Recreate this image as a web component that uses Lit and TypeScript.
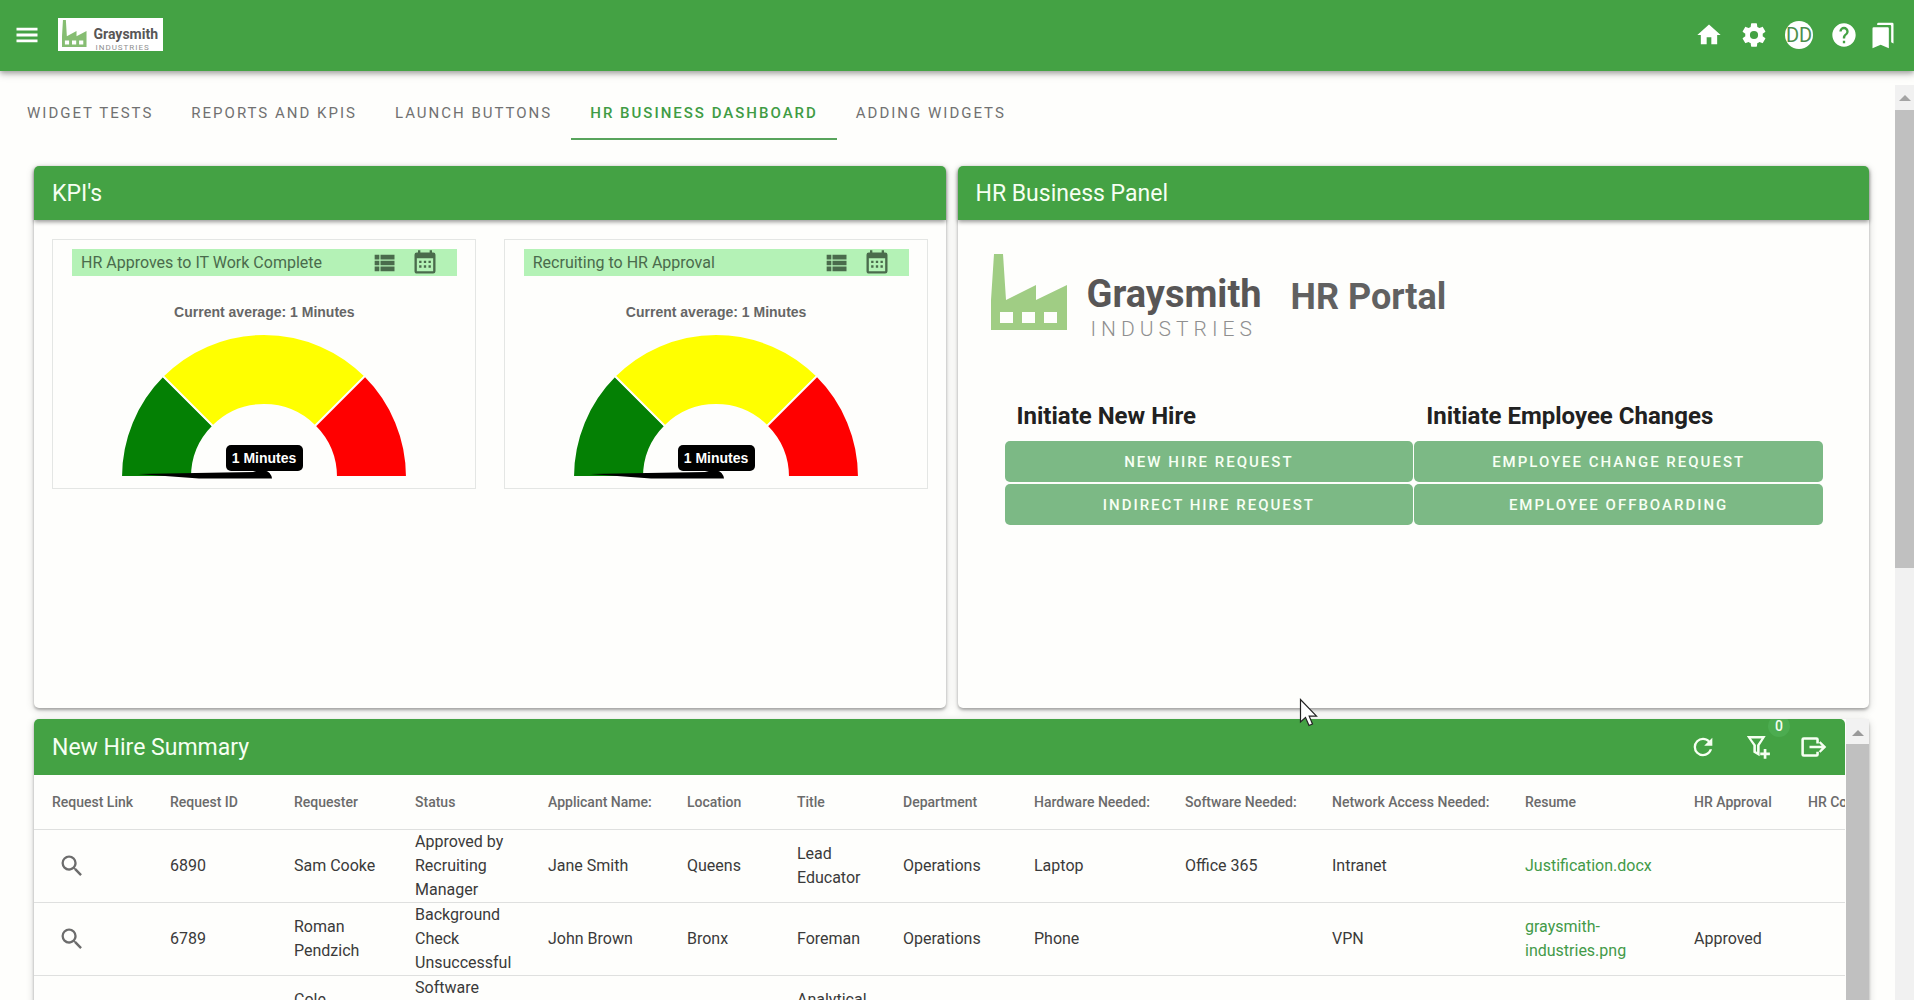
import { LitElement, html, css, svg } from "lit";
import { customElement, property } from "lit/decorators.js";
import { classMap } from "lit/directives/class-map.js";

const ICONS: Record<string, string> = {
  menu: "M3,5.7H21V8.2H3V5.7M3,10.8H21V13.2H3V10.8M3,15.8H21V18.3H3V15.8Z",
  home: "M10,20V14H14V20H19V12H22L12,3L2,12H5V20H10Z",
  cog: "M12,15.5A3.5,3.5 0 0,1 8.5,12A3.5,3.5 0 0,1 12,8.5A3.5,3.5 0 0,1 15.5,12A3.5,3.5 0 0,1 12,15.5M19.43,12.97C19.47,12.65 19.5,12.33 19.5,12C19.5,11.67 19.47,11.34 19.43,11L21.54,9.37C21.73,9.22 21.78,8.95 21.66,8.73L19.66,5.27C19.54,5.05 19.27,4.96 19.05,5.05L16.56,6.05C16.04,5.66 15.5,5.32 14.87,5.07L14.5,2.42C14.46,2.18 14.25,2 14,2H10C9.75,2 9.54,2.18 9.5,2.42L9.13,5.07C8.5,5.32 7.96,5.66 7.44,6.05L4.95,5.05C4.73,4.96 4.46,5.05 4.34,5.27L2.34,8.73C2.21,8.95 2.27,9.22 2.46,9.37L4.57,11C4.53,11.34 4.5,11.67 4.5,12C4.5,12.33 4.53,12.65 4.57,12.97L2.46,14.63C2.27,14.78 2.21,15.05 2.34,15.27L4.34,18.73C4.46,18.95 4.73,19.03 4.95,18.95L7.44,17.94C7.96,18.34 8.5,18.68 9.13,18.93L9.5,21.58C9.54,21.82 9.75,22 10,22H14C14.25,22 14.46,21.82 14.5,21.58L14.87,18.93C15.5,18.67 16.04,18.34 16.56,17.94L19.05,18.95C19.27,19.03 19.54,18.95 19.66,18.73L21.66,15.27C21.78,15.05 21.73,14.78 21.54,14.63L19.43,12.97Z",
  help: "M15.07,11.25L14.17,12.17C13.45,12.89 13,13.5 13,15H11V14.5C11,13.39 11.45,12.39 12.17,11.67L13.41,10.41C13.78,10.05 14,9.55 14,9C14,7.89 13.1,7 12,7A2,2 0 0,0 10,9H8A4,4 0 0,1 12,5A4,4 0 0,1 16,9C16,9.88 15.64,10.67 15.07,11.25M13,19H11V17H13M12,2A10,10 0 0,0 2,12A10,10 0 0,0 12,22A10,10 0 0,0 22,12C22,6.47 17.5,2 12,2Z",
  bookmarks: "M19 18.300L21 19.300V2.600Q21 1.600 20 1.600H8Q7 1.600 7 2.600V3.400H18.200Q19 3.400 19 4.200V18.300ZM16 5.400H4Q3 5.400 3 6.400V23.400L10 20.400L17 23.400V6.400Q17 5.400 16 5.400Z",
  list: "M9,5V9H21V5M9,19H21V15H9M9,14H21V10H9M4,9H8V5H4M4,19H8V15H4M4,14H8V10H4V14Z",
  calendar: "M9,10V12H7V10H9M13,10V12H11V10H13M17,10V12H15V10H17M19,3A2,2 0 0,1 21,5V19A2,2 0 0,1 19,21H5C3.89,21 3,20.1 3,19V5A2,2 0 0,1 5,3H6V1H8V3H16V1H18V3H19M19,19V8H5V19H19M9,14V16H7V14H9M13,14V16H11V14H13M17,14V16H15V14H17Z",
  refresh: "M17.65,6.35C16.2,4.9 14.21,4 12,4A8,8 0 0,0 4,12A8,8 0 0,0 12,20C15.73,20 18.84,17.45 19.73,14H17.65C16.83,16.33 14.61,18 12,18A6,6 0 0,1 6,12A6,6 0 0,1 12,6C13.66,6 15.14,6.69 16.22,7.78L13,11H20V4L17.65,6.35Z",
  filter: "M2.4,2.6H18.6L13.4,10.8V20L8,16.8V10.8L2.4,2.600ZM6,4.800L10.2,10.200V15.600L11.200,16.200V10.200L15,4.800H6ZM16.900,13.800H19.200V16.800H22.200V19.100H19.200V22.100H16.900V19.100H13.900V16.800H16.900V13.800Z",
  exit: "M4,3.6H15A2,2 0 0,1 17,5.6V9H14.8V5.8H4.200V18.2H14.8V16H17V18.4A2,2 0 0,1 15,20.4H4A2,2 0 0,1 2,18.4V5.6A2,2 0 0,1 4,3.6M18.4,7L23.4,12L18.4,17L17,15.6L19.4,13.100H9V10.900H19.4L17,8.4L18.4,7Z",
  search: "M9.5,3A6.5,6.5 0 0,1 16,9.5C16,11.11 15.41,12.59 14.44,13.73L14.71,14H15.5L20.5,19L19,20.5L14,15.5V14.71L13.73,14.44C12.59,15.41 11.11,16 9.5,16A6.5,6.5 0 0,1 3,9.5A6.5,6.5 0 0,1 9.5,3M9.5,5C7,5 5,7 5,9.5C5,12 7,14 9.5,14C12,14 14,12 14,9.5C14,7 12,5 9.5,5Z",
};

const icon = (name: string) =>
  html`<svg class="icon" viewBox="0 0 24 24" aria-hidden="true"><path fill-rule="evenodd" d=${ICONS[name]} /></svg>`;

const shared = css`
  * { box-sizing: border-box; }
  button {
    border: 0;
    margin: 0;
    padding: 0;
    background: none;
    color: inherit;
    font: inherit;
    cursor: pointer;
  }
  a { color: inherit; text-decoration: none; }
  .icon { display: block; width: 28px; height: 28px; fill: currentColor; }
`;

@customElement("brand-logo")
class BrandLogo extends LitElement {
  @property({ type: Boolean, reflect: true }) small = false;
  static styles = css`
    :host { display: flex; gap: 20px; }
    .mark { display: block; width: 76px; height: 76px; fill: #a0cd84; }
    .words { display: flex; flex-direction: column; padding-top: 18px; }
    .name { font: 700 38px/44px Roboto, sans-serif; color: #585656; }
    .sub {
      padding-left: 4px;
      font: 300 21px/26px Roboto, sans-serif;
      letter-spacing: 5px;
      color: #8f8f8f;
    }
    :host([small]) {
      gap: 7px;
      padding: 2px 5px 0 4px;
      background: #fff;
      height: 33px;
      width: 105px;
      box-sizing: border-box;
      overflow: hidden;
    }
    :host([small]) .mark { width: 26px; height: 27px; fill: #86bd72; }
    :host([small]) .words { padding-top: 4px; }
    :host([small]) .name { font-size: 14px; line-height: 20px; }
    :host([small]) .sub { font-size: 8px; line-height: 8px; letter-spacing: 1px; padding-left: 2px; font-weight: 400; }
  `;
  render() {
    return html`
      <svg class="mark" viewBox="0 0 76 76" preserveAspectRatio="none" role="img" aria-label="Factory">
        <path
          fill-rule="evenodd"
          d="M3 0H12L15 46L45 31V46L76 31V76H0V46ZM9 58V69H22V58ZM31 58V69H44V58ZM53 58V69H66V58Z"
        />
      </svg>
      <div class="words"><span class="name">Graysmith</span><span class="sub">INDUSTRIES</span></div>
    `;
  }
}

@customElement("kpi-gauge")
class KpiGauge extends LitElement {
  @property() label = "";
  @property() value = "";
  static styles = [
    shared,
    css`
      :host {
        display: block;
        border: 1px solid #e4e6e4;
        padding: 9px 18px 8px 19px;
      }
      .bar {
        display: flex;
        align-items: center;
        height: 27px;
        padding: 0 18px 0 9px;
        background: #b4f2b6;
        color: #4a6b4c;
        font-size: 16px;
        line-height: 27px;
      }
      .title { flex: 1; }
      .bar button + button { margin-left: 13px; }
      .average {
        margin: 26px 0 12px;
        text-align: center;
        font: 700 14px/20px "Liberation Sans", Arial, sans-serif;
        color: #666;
      }
      .dial { display: block; width: 286px; height: 146px; margin: 0 auto; }
      .badge { font: 700 14px "Liberation Sans", Arial, sans-serif; fill: #fff; text-anchor: middle; }
    `,
  ];
  private slice(from: number, to: number, color: string) {
    const at = (r: number, deg: number) => {
      const a = (deg * Math.PI) / 180;
      return `${(143 - r * Math.cos(a)).toFixed(2)} ${(143 - r * Math.sin(a)).toFixed(2)}`;
    };
    return svg`<path fill=${color} stroke="#fefefc" stroke-width="2"
      d="M${at(143, from)}A143 143 0 0 1 ${at(143, to)}L${at(72, to)}A72 72 0 0 0 ${at(72, from)}Z" />`;
  }
  render() {
    return html`
      <div class="bar">
        <span class="title">${this.label}</span>
        <button aria-label="Show list">${icon("list")}</button>
        <button aria-label="Choose dates">${icon("calendar")}</button>
      </div>
      <div class="average">Current average: ${this.value}</div>
      <svg class="dial" viewBox="0 0 286 146" role="img" aria-label=${this.value}>
        ${this.slice(0, 45, "#048004")} ${this.slice(45, 135, "#ffff00")} ${this.slice(135, 180, "#ff0000")}
        <path d="M17 140L132 138Q136 136 144 136.500Q150 138 151 144.500H78Z" />
        <rect x="105" y="111" width="77" height="26" rx="5" />
        <text class="badge" x="143" y="129">${this.value}</text>
      </svg>
    `;
  }
}

interface Request {
  id: string;
  requester: string;
  status: string;
  applicant: string;
  location: string;
  title: string;
  department: string;
  hardware: string;
  software: string;
  network: string;
  resume: string;
  approval: string;
}

const COLUMNS = [
  "Request Link", "Request ID", "Requester", "Status", "Applicant Name:", "Location", "Title", "Department",
  "Hardware Needed:", "Software Needed:", "Network Access Needed:", "Resume", "HR Approval", "HR Co",
];

const ROWS: Request[] = [
  {
    id: "6890", requester: "Sam Cooke", status: "Approved by\nRecruiting\nManager", applicant: "Jane Smith",
    location: "Queens", title: "Lead\nEducator", department: "Operations", hardware: "Laptop",
    software: "Office 365", network: "Intranet", resume: "Justification.docx", approval: "",
  },
  {
    id: "6789", requester: "Roman\nPendzich", status: "Background\nCheck\nUnsuccessful", applicant: "John Brown",
    location: "Bronx", title: "Foreman", department: "Operations", hardware: "Phone",
    software: "", network: "VPN", resume: "graysmith-\nindustries.png", approval: "Approved",
  },
  {
    id: "", requester: "Cole\n\u00a0", status: "Software\n\u00a0\n\u00a0", applicant: "", location: "",
    title: "Analytical\n\u00a0", department: "", hardware: "", software: "", network: "", resume: "", approval: "",
  },
];

@customElement("hire-summary")
class HireSummary extends LitElement {
  static styles = [
    shared,
    css`
      :host { display: flex; min-width: 0; }
      .pane { flex: 1; min-width: 0; overflow: hidden; border-radius: 5px 5px 0 0; }
      .head {
        display: flex;
        align-items: center;
        height: 56px;
        padding: 0 18px;
        background: #44a244;
        color: #f6fff2;
      }
      h2 { flex: 1; margin: 0; font-size: 23px; font-weight: 400; }
      .tools { display: flex; gap: 27px; }
      .tools button { position: relative; }
      .count {
        position: absolute;
        left: 24px;
        top: -18px;
        width: 22px;
        height: 22px;
        border-radius: 50%;
        background: #4cac50;
        font: 500 14px/22px Roboto, sans-serif;
        text-align: center;
      }
      table { width: 1900px; table-layout: fixed; border-collapse: collapse; }
      th, td { padding: 0 0 0 18px; text-align: left; border-bottom: 1px solid #dfe0df; }
      th { height: 54px; font-size: 14px; font-weight: 500; color: #6b6b6b; white-space: nowrap; }
      td { height: 73px; font-size: 16px; line-height: 24px; color: #3a3a3a; white-space: pre; }
      td a { color: #439a48; }
      td button { display: block; margin-left: 6px; color: #6c6c6c; }
      .c0 { width: 118px; } .c1 { width: 124px; } .c2 { width: 121px; } .c3 { width: 133px; }
      .c4 { width: 139px; } .c5 { width: 110px; } .c6 { width: 106px; } .c7 { width: 131px; }
      .c8 { width: 151px; } .c9 { width: 147px; } .c10 { width: 193px; } .c11 { width: 169px; }
      .c12 { width: 114px; }
      .scroll { width: 23px; margin-left: 1px; background: #c0c0c0; }
      .up { display: flex; justify-content: center; padding-top: 11px; height: 25px; background: #f2f2f2; }
      .up::before {
        content: "";
        width: 0;
        height: 0;
        border: 6px solid transparent;
        border-top: 0;
        border-bottom-color: #9a9a9a;
      }
    `,
  ];
  render() {
    return html`
      <div class="pane">
        <div class="head">
          <h2>New Hire Summary</h2>
          <div class="tools">
            <button aria-label="Refresh">${icon("refresh")}</button>
            <button aria-label="Add filter">${icon("filter")}<span class="count">0</span></button>
            <button aria-label="Export">${icon("exit")}</button>
          </div>
        </div>
        <table>
          <thead>
            <tr>${COLUMNS.map((c, i) => html`<th class="c${i}" scope="col">${c}</th>`)}</tr>
          </thead>
          <tbody>
            ${ROWS.map(
              (r) => html`<tr>
                <td><button aria-label="Open request">${icon("search")}</button></td>
                <td>${r.id}</td><td>${r.requester}</td><td>${r.status}</td><td>${r.applicant}</td>
                <td>${r.location}</td><td>${r.title}</td><td>${r.department}</td><td>${r.hardware}</td>
                <td>${r.software}</td><td>${r.network}</td>
                <td>${r.resume ? html`<a href="#resume">${r.resume}</a>` : ""}</td>
                <td>${r.approval}</td><td></td>
              </tr>`,
            )}
          </tbody>
        </table>
      </div>
      <div class="scroll"><div class="up"></div></div>
    `;
  }
}

const TABS = ["WIDGET TESTS", "REPORTS AND KPIS", "LAUNCH BUTTONS", "HR BUSINESS DASHBOARD", "ADDING WIDGETS"];

@customElement("app-root")
class AppRoot extends LitElement {
  static styles = [
    shared,
    css`
      :host {
        display: flex;
        flex-direction: column;
        height: 100vh;
        overflow: hidden;
        background: #fefefc;
        font-family: Roboto, sans-serif;
        font-size: 16px;
      }
      .topbar {
        display: flex;
        align-items: center;
        flex: none;
        height: 71px;
        padding: 0 17px 2px 13px;
        background: #44a244;
        color: #fff;
        box-shadow: 0 2px 5px rgba(0, 0, 0, 0.3), 0 4px 8px rgba(0, 0, 0, 0.12);
      }
      .topbar brand-logo { margin-left: 17px; margin-right: auto; }
      .actions { display: flex; align-items: center; gap: 17px; }
      .actions button:last-child { margin-left: -6px; }
      .avatar {
        width: 28px;
        height: 28px;
        border-radius: 50%;
        background: #fff;
        color: #4d8f4d;
        font-size: 20px;
        line-height: 28px;
        text-align: center;
      }
      .page { display: flex; flex: 1; min-height: 0; padding-top: 14px; }
      .content { flex: 1; min-width: 0; overflow: hidden; }
      .tabs { display: flex; padding-left: 8px; }
      .tab {
        height: 55px;
        padding: 2px 19px 0;
        border-bottom: 2px solid transparent;
        color: #717171;
        font-size: 15px;
        font-weight: 400;
        letter-spacing: 2px;
      }
      .tab.active { color: #3f9c44; border-bottom-color: #58a45c; font-weight: 500; }
      .board {
        display: grid;
        grid-template-columns: 1fr 1fr;
        gap: 11px 12px;
        padding: 26px 26px 0 34px;
      }
      .card {
        min-height: 542px;
        border-radius: 5px;
        background: #fefefc;
        box-shadow: 0 2px 3px rgba(0, 0, 0, 0.28), 0 2px 8px rgba(0, 0, 0, 0.16);
      }
      .card h2 {
        margin: 0;
        height: 54px;
        padding: 0 18px;
        border-radius: 5px 5px 0 0;
        background: #44a244;
        box-shadow: 0 2px 4px rgba(0, 0, 0, 0.4);
        color: #f6fff2;
        font-size: 23px;
        font-weight: 400;
        line-height: 56px;
      }
      .gauges { display: grid; grid-template-columns: 1fr 1fr; gap: 28px; padding: 19px 18px 0 18px; }
      .wide { grid-column: 1 / -1; }
      .portal { display: flex; padding: 34px 33px 0; }
      .portal h3 { margin: 0 0 0 29px; font-size: 36px; font-weight: 700; line-height: 87px; color: #616161; }
      .launch { display: grid; grid-template-columns: 1fr 1fr; gap: 2px 1px; padding: 58px 46px 0 47px; }
      .launch h4 { margin: 0; padding: 0 12px 7px; font-size: 24px; line-height: 32px; color: #212121; }
      .launch button {
        height: 41px;
        border-radius: 5px;
        background: #7cb985;
        color: #f7fff4;
        font-size: 15px;
        font-weight: 500;
        letter-spacing: 2px;
      }
      .scroll { width: 19px; background: #f1f1f1; }
      .up { display: flex; justify-content: center; height: 25px; padding-top: 10px; }
      .up::before {
        content: "";
        width: 0;
        height: 0;
        border: 6px solid transparent;
        border-top: 0;
        border-bottom-color: #a4a4a4;
      }
      .thumb { height: 50%; background: #c0c0c0; }
      .cursor { position: absolute; left: 1299px; top: 698px; width: 20px; height: 29px; }
    `,
  ];
  render() {
    return html`
      <header class="topbar">
        <button aria-label="Menu">${icon("menu")}</button>
        <brand-logo small></brand-logo>
        <div class="actions">
          <button aria-label="Home">${icon("home")}</button>
          <button aria-label="Settings">${icon("cog")}</button>
          <button class="avatar">DD</button>
          <button aria-label="Help">${icon("help")}</button>
          <button aria-label="Bookmarks">${icon("bookmarks")}</button>
        </div>
      </header>
      <div class="page">
        <main class="content">
          <nav class="tabs">
            ${TABS.map((t, i) => html`<button class=${classMap({ tab: true, active: i === 3 })}>${t}</button>`)}
          </nav>
          <div class="board">
            <section class="card">
              <h2>KPI's</h2>
              <div class="gauges">
                <kpi-gauge label="HR Approves to IT Work Complete" value="1 Minutes"></kpi-gauge>
                <kpi-gauge label="Recruiting to HR Approval" value="1 Minutes"></kpi-gauge>
              </div>
            </section>
            <section class="card">
              <h2>HR Business Panel</h2>
              <div class="portal"><brand-logo></brand-logo><h3>HR Portal</h3></div>
              <div class="launch">
                <h4>Initiate New Hire</h4>
                <h4>Initiate Employee Changes</h4>
                <button>NEW HIRE REQUEST</button>
                <button>EMPLOYEE CHANGE REQUEST</button>
                <button>INDIRECT HIRE REQUEST</button>
                <button>EMPLOYEE OFFBOARDING</button>
              </div>
            </section>
            <hire-summary class="card wide"></hire-summary>
          </div>
        </main>
        <div class="scroll"><div class="up"></div><div class="thumb"></div></div>
      </div>
      <svg class="cursor" viewBox="0 0 20 29" aria-hidden="true">
        <path d="M1.500 1.500V24L6.500 19.500L10 27.500L13.500 26L10.200 18.200H17.500Z" fill="#fff" stroke="#222" stroke-width="1.200" />
      </svg>
    `;
  }
}
